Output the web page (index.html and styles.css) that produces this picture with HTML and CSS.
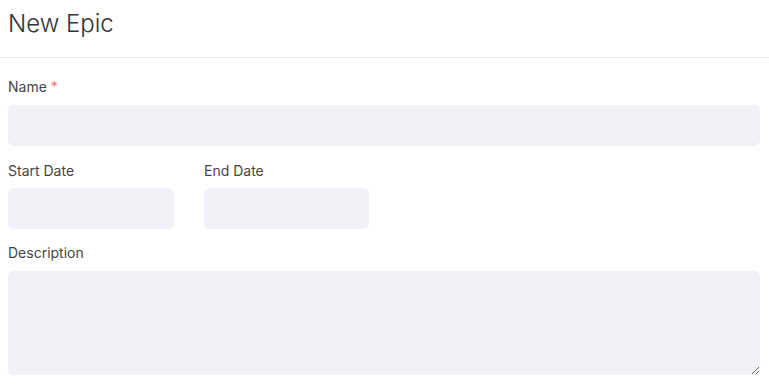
FILE: index.html
```html
<!DOCTYPE html>
<html lang="en">
<head>
    <meta charset="UTF-8">
    <meta name="viewport" content="width=device-width, initial-scale=1.0">
    <title>New Epic</title>
    <link rel="stylesheet" href="styles.css">
</head>
<body>

<div class="header">
    <h1>New Epic</h1>
</div>

<form class="form">
    <div class="field">
        <label for="name">Name <span class="req">*</span></label>
        <input type="text" id="name">
    </div>

    <div class="row">
        <div class="field date">
            <label for="start">Start Date</label>
            <input type="text" id="start">
        </div>
        <div class="field date">
            <label for="end">End Date</label>
            <input type="text" id="end">
        </div>
    </div>

    <div class="field">
        <label for="desc">Description</label>
        <textarea id="desc"></textarea>
    </div>
</form>

</body>
</html>
```

FILE: styles.css
```css
body {
    margin: 0;
    font-family: Inter, "Noto Sans", sans-serif;
    background-color: #fff;
    color: #333;
}
.header {
    padding: 8px 8px 17px;
    border-bottom: 1px solid #e6e6ea;
}
.header h1 {
    margin: 0;
    font-size: 24px;
    line-height: 32px;
    font-weight: 300;
    color: #333;
}
.form {
    padding: 19px 9px 0 8px;
}
.field {
    margin-bottom: 15px;
}
label {
    display: block;
    font-size: 14px;
    line-height: 20px;
    margin-bottom: 8px;
    color: #454545;
}
.req {
    color: #f5707f;
}
input, textarea {
    display: block;
    width: 100%;
    box-sizing: border-box;
    height: 41px;
    border: none;
    border-radius: 6px;
    background-color: #f1f2f7;
    font-family: inherit;
    font-size: 14px;
    padding: 8px 12px;
}
textarea {
    height: 104px;
    resize: vertical;
}
.row {
    display: flex;
    gap: 30px;
}
.row .field {
    width: 166px;
    margin-bottom: 14px;
}
.row .field.date + .field.date {
    width: 165px;
}
.row label {
    margin-bottom: 7px;
}
```
